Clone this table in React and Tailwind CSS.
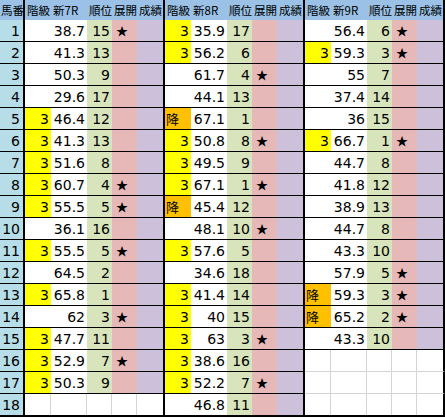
import React from "react";

const g1 = [
  ["", "38.7", "15", 1],
  ["", "41.3", "13", 0],
  ["", "50.3", "9", 0],
  ["", "29.6", "17", 0],
  ["3", "46.4", "12", 0],
  ["3", "41.3", "13", 0],
  ["3", "51.6", "8", 0],
  ["3", "60.7", "4", 1],
  ["3", "55.5", "5", 1],
  ["", "36.1", "16", 0],
  ["3", "55.5", "5", 1],
  ["", "64.5", "2", 0],
  ["3", "65.8", "1", 0],
  ["", "62", "3", 1],
  ["3", "47.7", "11", 0],
  ["3", "52.9", "7", 1],
  ["3", "50.3", "9", 0],
  null,
];

const g2 = [
  ["3", "35.9", "17", 0],
  ["3", "56.2", "6", 0],
  ["", "61.7", "4", 1],
  ["", "44.1", "13", 0],
  ["降", "67.1", "1", 0],
  ["3", "50.8", "8", 1],
  ["3", "49.5", "9", 0],
  ["3", "67.1", "1", 1],
  ["降", "45.4", "12", 0],
  ["", "48.1", "10", 1],
  ["3", "57.6", "5", 0],
  ["", "34.6", "18", 0],
  ["3", "41.4", "14", 0],
  ["3", "40", "15", 0],
  ["3", "63", "3", 1],
  ["3", "38.6", "16", 0],
  ["3", "52.2", "7", 1],
  ["", "46.8", "11", 0],
];

const g3 = [
  ["", "56.4", "6", 1],
  ["3", "59.3", "3", 1],
  ["", "55", "7", 0],
  ["", "37.4", "14", 0],
  ["", "36", "15", 0],
  ["3", "66.7", "1", 1],
  ["", "44.7", "8", 0],
  ["", "41.8", "12", 0],
  ["", "38.9", "13", 0],
  ["", "44.7", "8", 0],
  ["", "43.3", "10", 0],
  ["", "57.9", "5", 1],
  ["降", "59.3", "3", 1],
  ["降", "65.2", "2", 1],
  ["", "43.3", "10", 0],
  null,
  null,
  null,
];

const widths = ["w-[26px]", "w-[36px]", "w-[25px]", "w-[25px]", "w-[26px]"];

function Header({ race }) {
  const labels = ["階級", race, "順位", "展開", "成績"];
  return (
    <div className="flex w-[140px] h-full items-center border-r-2 border-black">
      {labels.map((l, i) => (
        <div key={i} className={`${widths[i]} shrink-0 overflow-hidden whitespace-nowrap pl-[2px] leading-[18px]`}>
          {l}
        </div>
      ))}
    </div>
  );
}

function Group({ row, lineClass }) {
  if (!row) {
    return (
      <div className={`flex w-[140px] h-full border-r-2 border-black border-b ${lineClass}`}>
        {widths.map((w, i) => (
          <div key={i} className={`${w} h-full bg-white ${i < 4 ? "border-r border-[#d4d4d4]" : ""}`} />
        ))}
      </div>
    );
  }
  const [kyu, score, rank, star] = row;
  const kyuClass =
    kyu === "3"
      ? "bg-[#ffff00] justify-end pr-[2px]"
      : kyu === "降"
      ? "bg-[#ffc000] justify-start pl-[1px] text-[13px] font-['Noto_Sans_CJK_JP',sans-serif]"
      : "bg-white";
  return (
    <div className={`flex w-[140px] h-full border-r-2 border-black border-b ${lineClass}`}>
      <div className={`w-[26px] flex items-center ${kyuClass}`}>{kyu}</div>
      <div className="w-[36px] flex items-center justify-end pr-[2px] bg-white">{score}</div>
      <div className="w-[25px] flex items-center justify-end pr-[2px] bg-[#d8e4bc]">{rank}</div>
      <div className="w-[25px] flex items-center pl-[4px] bg-[#e6b8b7] text-[12px] font-['Noto_Sans_CJK_JP',sans-serif]">
        {star ? "★" : ""}
      </div>
      <div className="w-[26px] bg-[#ccc0da]" />
    </div>
  );
}

export default function App() {
  return (
    <div className="w-[445px] h-[418px] bg-white font-['DejaVu_Sans','Noto_Sans_CJK_JP',sans-serif] text-[14px] leading-none text-black">
      {/* header */}
      <div className="flex h-[20px] bg-[#9bc2e6] text-[11.5px] font-['Noto_Sans_CJK_JP',sans-serif]">
        <div className="w-[25px] h-full flex items-center border-r-2 border-black pl-[1px] whitespace-nowrap overflow-hidden leading-[18px]">
          馬番
        </div>
        <Header race="新7R" />
        <Header race="新8R" />
        <Header race="新9R" />
      </div>
      {g1.map((r, i) => {
        const last = i === 17;
        return (
          <div key={i} className={`flex ${last ? "h-[23px] border-b-2 border-black" : "h-[22px]"}`}>
            <div
              className={`w-[25px] h-full flex items-center justify-end pr-[3px] bg-[#b7dee8] border-r-2 border-black ${last ? "" : "border-b"}`}
            >
              {i + 1}
            </div>
            <Group row={r} lineClass={last ? "border-b-0" : "border-black"} />
            <Group row={g2[i]} lineClass={last ? "border-b-0" : "border-black"} />
            <Group
              row={g3[i]}
              lineClass={last ? "border-b-0" : i >= 15 ? "border-b-[#d4d4d4]" : "border-b-black"}
            />
          </div>
        );
      })}
    </div>
  );
}
